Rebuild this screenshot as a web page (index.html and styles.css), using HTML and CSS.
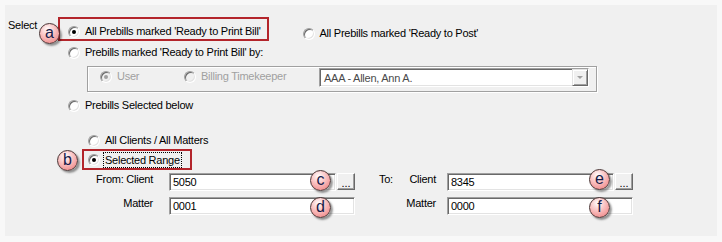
FILE: index.html
```html
<!DOCTYPE html>
<html lang="en">
<head>
<meta charset="UTF-8" />
<title>Select Prebills</title>
<link rel="stylesheet" href="styles.css">
</head>
<body>
<div class="panel">
  <div class="row-first">
    <div class="select-label">Select</div>
    <div class="mark mark-a">
      <div class="opt"><span class="radio checked"></span>All Prebills marked 'Ready to Print Bill'</div>
    </div>
    <div class="opt post"><span class="radio"></span>All Prebills marked 'Ready to Post'</div>
  </div>
  <div class="opt indent by"><span class="radio"></span>Prebills marked 'Ready to Print Bill' by:</div>
  <div class="group">
    <div class="opt disabled user"><span class="radio checked"></span>User</div>
    <div class="opt disabled"><span class="radio"></span>Billing Timekeeper</div>
    <div class="combo">
      <span class="combo-text">AAA - Allen, Ann A.</span>
      <span class="combo-btn"></span>
    </div>
  </div>
  <div class="opt indent below"><span class="radio"></span>Prebills Selected below</div>
  <div class="opt sub all"><span class="radio"></span>All Clients / All Matters</div>
  <div class="mark mark-b">
    <div class="opt"><span class="radio checked"></span><span class="focus">Selected Range</span></div>
  </div>
  <div class="range-row client-row">
    <div class="lbl-left">From: Client</div>
    <div class="field">
      <div class="input">5050</div>
      <div class="dots">...</div>
    </div>
    <div class="lbl-right"><span>To:</span><span>Client</span></div>
    <div class="field field-right">
      <div class="input">8345</div>
      <div class="dots">...</div>
    </div>
  </div>
  <div class="range-row matter-row">
    <div class="lbl-left">Matter</div>
    <div class="field">
      <div class="input">0001</div>
    </div>
    <div class="lbl-right end"><span>Matter</span></div>
    <div class="field field-right">
      <div class="input">0000</div>
    </div>
  </div>

  <!-- callout markers drawn over the dialog -->
  <span class="callout callout-a">a</span>
  <span class="callout callout-b">b</span>
  <span class="callout callout-c">c</span>
  <span class="callout callout-d">d</span>
  <span class="callout callout-e">e</span>
  <span class="callout callout-f">f</span>
</div>
</body>
</html>
```

FILE: styles.css
```css
body {
  margin: 0; background: #f8f8f8; color: #000;
  font-family: "Liberation Sans", Arial, sans-serif; font-size: 11px; letter-spacing: -0.25px;
}
.panel {
  position: relative; margin: 5px; width: 712px; height: 231px;
  box-sizing: border-box; padding-top: 12px; background: #f0f0f0;
}
.row-first { display: flex; align-items: flex-start; }
.select-label { margin-left: 3px; width: 50px; margin-top: 2px; line-height: 13px; }

.opt { display: flex; align-items: center; line-height: 13px; white-space: nowrap; }
.radio {
  width: 12px; height: 12px; box-sizing: border-box; border-radius: 50%; margin-right: 5px;
  border: 1px solid; border-color: #a0a0a0 #fff #fff #a0a0a0;
  box-shadow: inset 1px 1px 0 #696969, inset -1px -1px 0 #e3e3e3;
  background: #fff; position: relative; flex: none;
}
.radio.checked::after {
  content: ""; position: absolute; left: 3px; top: 3px; width: 4px; height: 4px;
  border-radius: 50%; background: #000;
}
.disabled { color: #a0a0a0; }
.disabled .radio { background: #f0f0f0; }
.disabled .radio.checked::after { background: #a0a0a0; }

.mark { border: 2px solid #b3252b; width: fit-content; display: flex; align-items: center; }
.mark-a { padding: 5px 6px 0 8px; height: 15px; }
.mark-b { margin: 2px 0 0 77px; padding: 0 9px 0 4px; height: 17px; }
.focus { outline: 1px dotted #000; padding: 0 1px; margin-left: -1px; line-height: 14px; }

.post { margin: 10px 0 0 34px; }
.indent { margin-left: 63px; }
.by { margin-top: 5px; }
.below { margin-top: 7px; }
.sub { margin-left: 83px; }
.all { margin-top: 22px; }

.group {
  display: flex; align-items: flex-start;
  margin: 7px 0 0 82px; width: 510px; height: 26px; box-sizing: border-box;
  padding-left: 12px; border: 1px solid #a0a0a0;
  box-shadow: inset 1px 1px 0 #fff, 1px 1px 0 #fff;
}
.group .opt { margin-top: 3px; }
.group .user { width: 84px; }
.combo {
  display: flex; align-items: center; margin: 1px 7px 0 auto;
  width: 270px; height: 19px; box-sizing: border-box; background: #fff;
  border: 1px solid; border-color: #a0a0a0 #fff #fff #a0a0a0;
  box-shadow: inset 1px 1px 0 #696969, inset -1px -1px 0 #e3e3e3;
}
.combo-text { padding-left: 4px; color: #4a4a4a; }
.combo-btn {
  margin-left: auto; align-self: stretch; width: 16px; box-sizing: border-box;
  background: #f0f0f0; border: 1px solid; border-color: #e3e3e3 #696969 #696969 #e3e3e3;
  box-shadow: inset 1px 1px 0 #fff, inset -1px -1px 0 #a0a0a0;
  display: flex; align-items: center; justify-content: center;
}
.combo-btn::after {
  content: ""; border-top: 3px solid #a0a0a0;
  border-left: 3px solid transparent; border-right: 3px solid transparent;
}

.range-row { display: flex; align-items: flex-start; line-height: 13px; }
.client-row { margin-top: 3px; }
.matter-row { margin-top: 6px; }
.lbl-left { width: 148px; text-align: right; }
.lbl-right { width: 57px; margin-left: 24px; display: flex; justify-content: space-between; }
.lbl-right.end { justify-content: flex-end; }
.field { margin-left: 16px; width: 186px; display: flex; gap: 1px; }
.field-right { margin-left: 11px; }
.input {
  flex: 1; height: 18px; box-sizing: border-box; background: #fff; padding: 2px 0 0 3px;
  border: 1px solid; border-color: #a0a0a0 #fff #fff #a0a0a0;
  box-shadow: inset 1px 1px 0 #696969, inset -1px -1px 0 #e3e3e3;
}
.dots {
  width: 18px; height: 17px; box-sizing: border-box; text-align: center; line-height: 18px;
  background: #f0f0f0; border: 1px solid; border-color: #fff #696969 #696969 #fff;
  box-shadow: inset -1px -1px 0 #a0a0a0; margin-top: 0; letter-spacing: 0;
}

.callout {
  position: absolute; width: 21px; height: 21px; box-sizing: border-box; border-radius: 50%;
  border: 1px solid #4a3434; color: #161a48; font-size: 16px; line-height: 18px;
  text-align: center; letter-spacing: 0;
  background: radial-gradient(circle at 40% 28%, #fff 0%, #fbd2d2 30%, #f39b9b 72%, #ea7f7f 100%);
  box-shadow: 2px 2px 2px rgba(0,0,0,0.4);
}
.callout-a { left: 34px; top: 18px; }
.callout-b { left: 52px; top: 145px; }
.callout-c { left: 305px; top: 165px; }
.callout-d { left: 305px; top: 192px; }
.callout-e { left: 584px; top: 164px; }
.callout-f { left: 584px; top: 192px; }
```
